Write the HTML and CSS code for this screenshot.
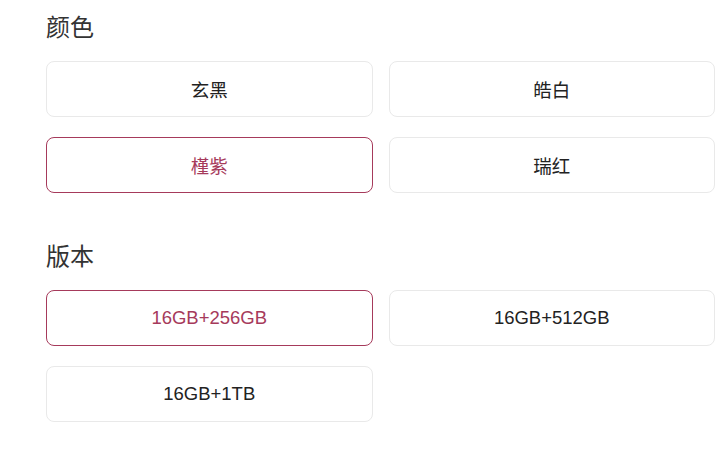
FILE: index.html
```html
<!DOCTYPE html>
<html lang="zh-CN">
<head>
  <meta charset="UTF-8">
  <title>选择规格</title>
  <meta name="viewport" content="width=device-width, initial-scale=1.0">
  <link rel="stylesheet" href="styles.css">
</head>
<body>

  <div class="page">
    <div class="group">
      <h2>颜色</h2>
      <div class="options">
        <button class="opt">玄黑</button>
        <button class="opt">皓白</button>
        <button class="opt active">槿紫</button>
        <button class="opt">瑞红</button>
      </div>
    </div>

    <div class="group">
      <h2>版本</h2>
      <div class="options">
        <button class="opt active">16GB+256GB</button>
        <button class="opt">16GB+512GB</button>
        <button class="opt">16GB+1TB</button>
      </div>
    </div>
  </div>

</body>
</html>
```

FILE: styles.css
```css
:root {
  --accent: #a63a5b;
  --text: #222;
  --line: #e9e9e9;
}

body {
  margin: 0;
  background: white;
  font-family: 'Liberation Sans', Arial, 'Noto Sans CJK SC', sans-serif;
  color: var(--text);
}

.page {
  padding: 12px 4px 0 46px;
  display: flex;
  flex-direction: column;
  gap: 48px;
}

h2 {
  margin: 0 0 17px;
  font-size: 24px;
  line-height: 32px;
  font-weight: normal;
  color: #333;
}

.options {
  display: grid;
  grid-template-columns: 1fr 1fr;
  column-gap: 16px;
  row-gap: 20px;
}

.opt {
  height: 56px;
  background: white;
  border: 1px solid var(--line);
  border-radius: 8px;
  font-family: inherit;
  font-size: 18.5px;
  color: var(--text);
  cursor: pointer;
}

.opt.active {
  border-color: var(--accent);
  color: var(--accent);
}
```
